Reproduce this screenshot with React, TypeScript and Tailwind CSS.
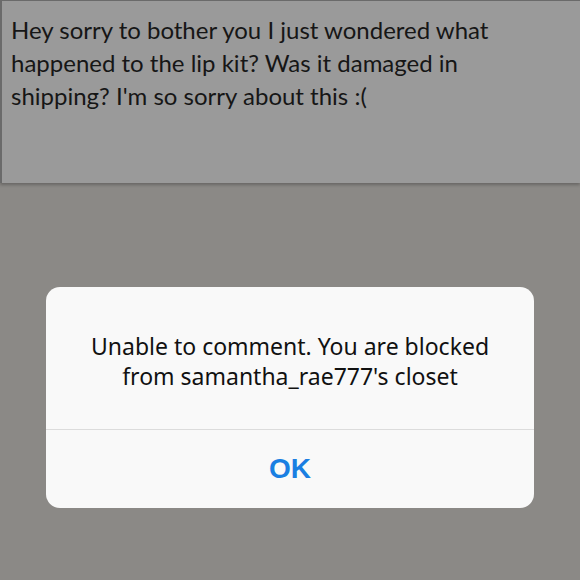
export default function App() {
  return (
    <div className="w-[580px] h-[580px] bg-[#8b8986] overflow-hidden flex flex-col">
      {/* Dimmed comment panel */}
      <div className="h-[183px] shrink-0 bg-[#9a9a9a] border-t border-l-2 border-[#6a6a6a] shadow-[0_2px_3px_rgba(0,0,0,0.25)] px-[9px] pt-[12px]">
        <p
          className="max-w-[520px] text-[24px] leading-[33px] text-[#161616]"
          style={{ fontFamily: "Lato, 'Noto Sans', sans-serif" }}
        >
          Hey sorry to bother you I just wondered what happened to the lip kit? Was it damaged in shipping? I'm so sorry about this :(
        </p>
      </div>

      {/* Alert */}
      <div className="mx-[46px] mt-[104px] bg-[#f9f9f9] rounded-[14px] flex flex-col overflow-hidden">
        <div
          className="h-[142px] flex items-center justify-center px-2 pt-[6px] text-center text-[23px] leading-[30px] text-[#111]"
          style={{ fontFamily: "'Noto Sans', Arial, sans-serif" }}
        >
          <p>
            Unable to comment. You are blocked
            <br />
            from samantha_rae777's closet
          </p>
        </div>
        <div className="h-px bg-[#dcdcdc]" />
        <div
          className="h-[78px] flex items-center justify-center text-[28px] font-bold text-[#1a7fe2]"
          style={{ fontFamily: "'Liberation Sans', Arial, sans-serif" }}
        >
          OK
        </div>
      </div>
    </div>
  );
}
